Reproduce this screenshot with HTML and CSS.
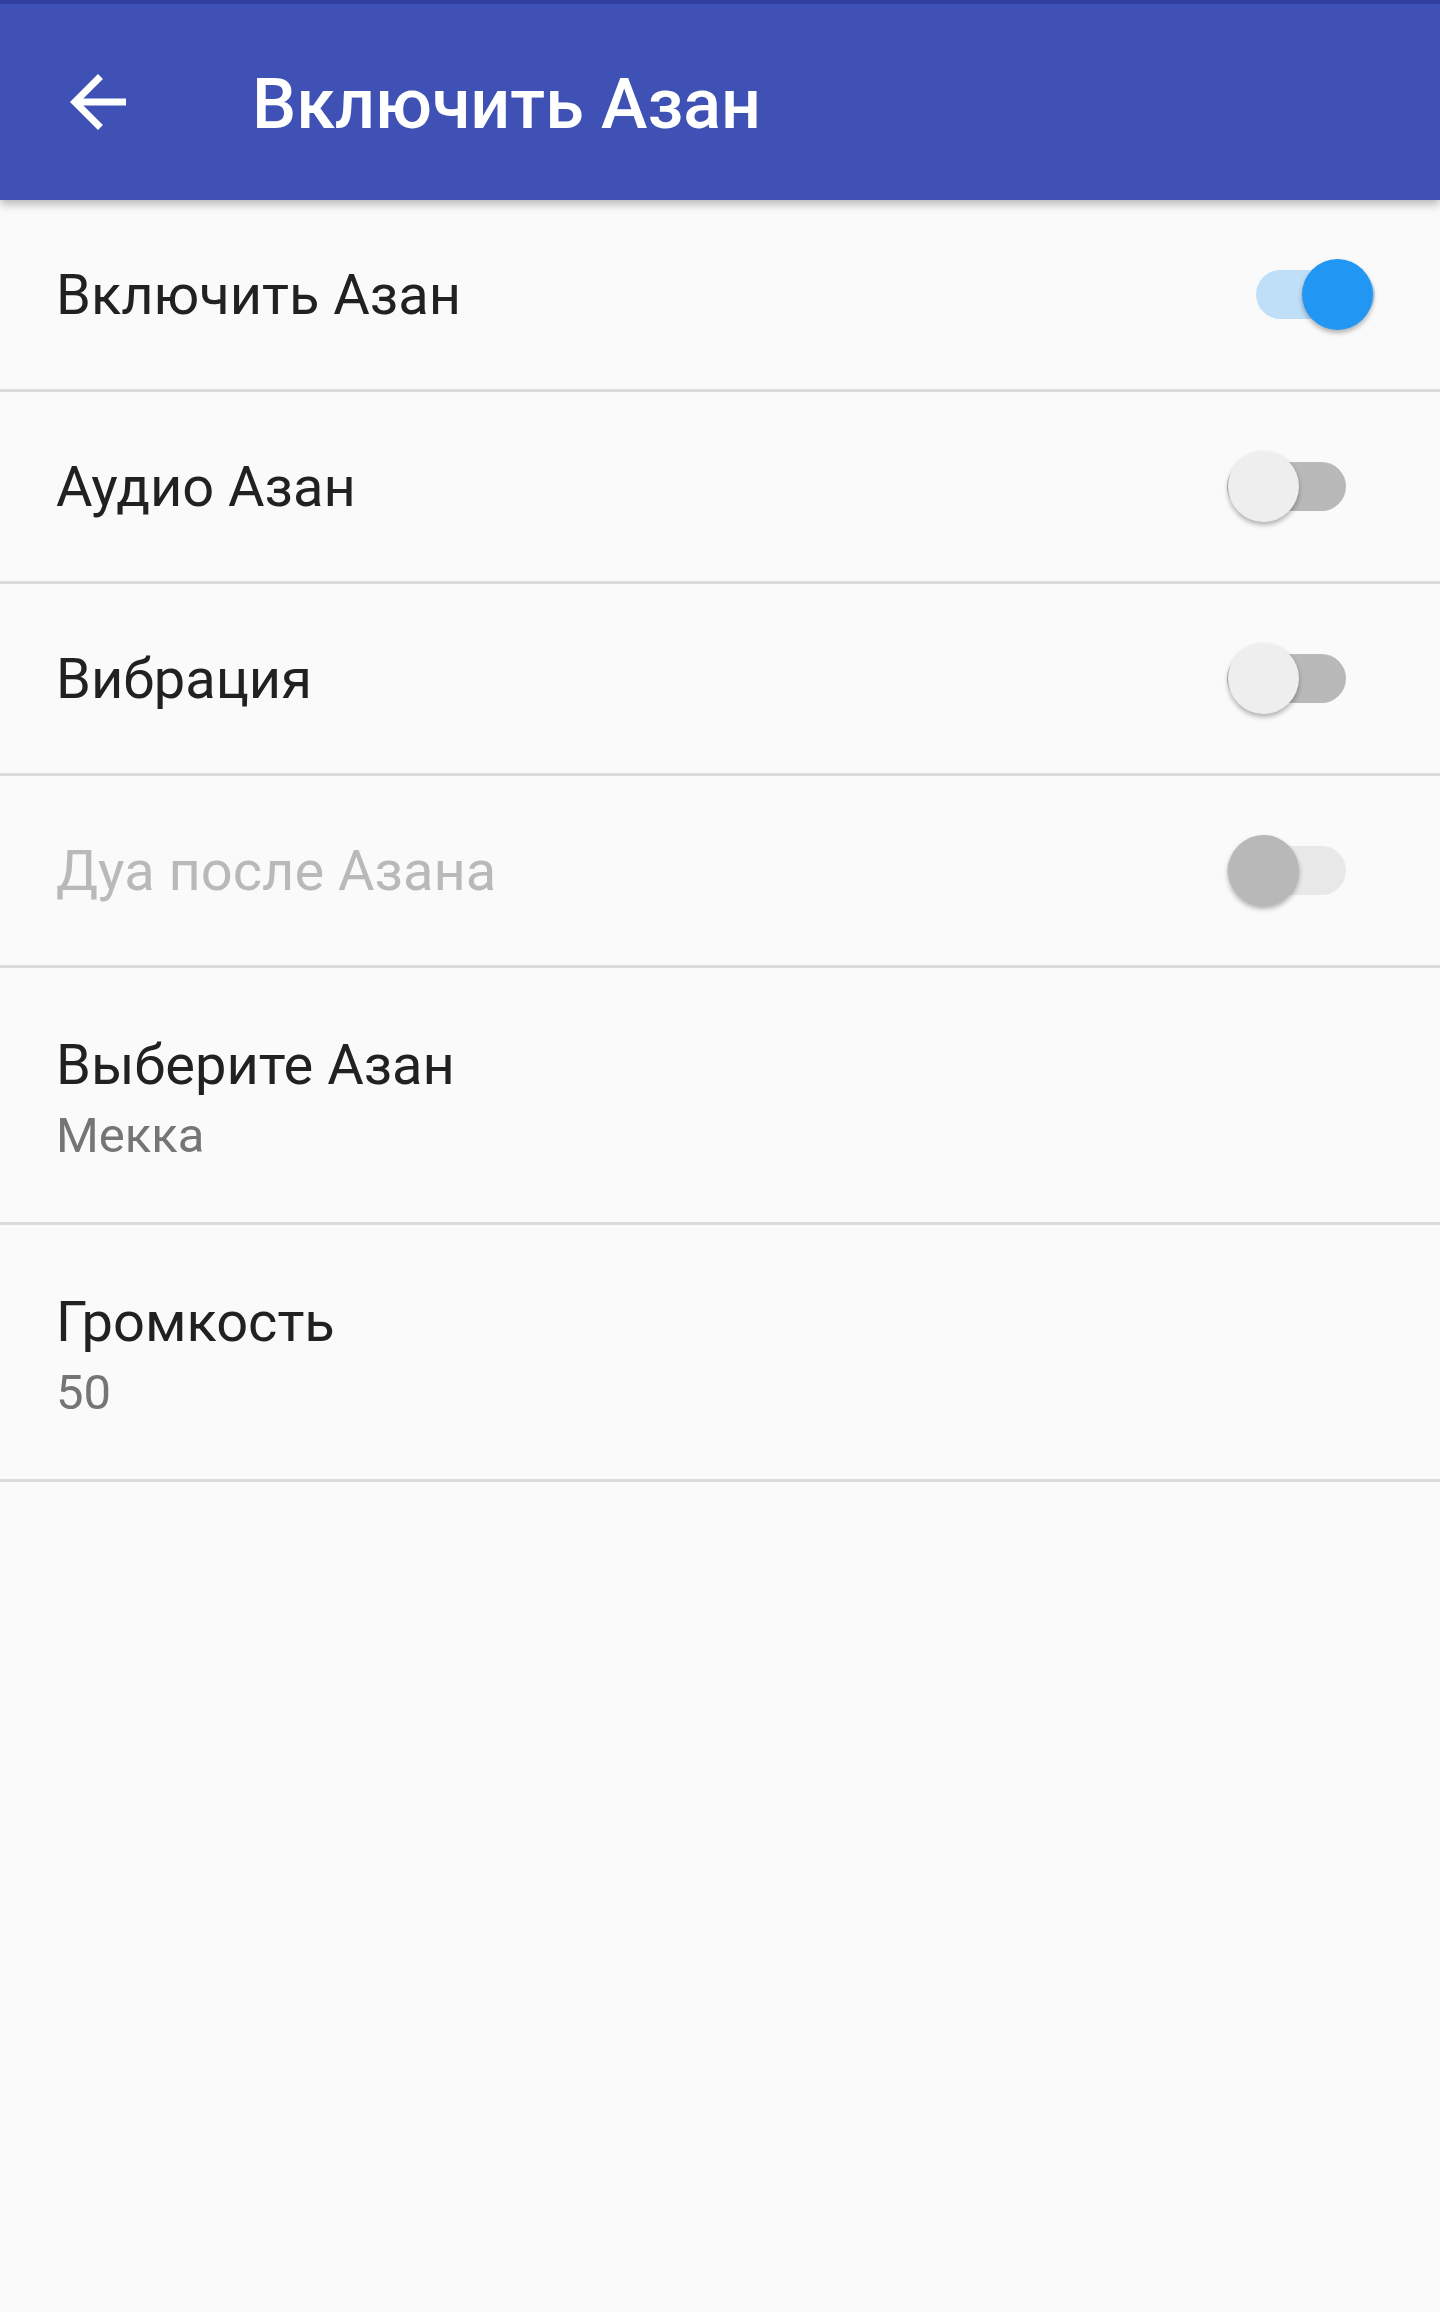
FILE: index.html
```html
<!DOCTYPE html>
<html>
<head>
<meta charset="utf-8">
<link rel="stylesheet" href="styles.css">
</head>
<body>
<header class="top">
    <div class="status"></div>
    <div class="appbar">
        <svg class="back" viewBox="0 0 24 24" width="84" height="84">
            <path fill="#fff" d="M20 11H7.83l5.59-5.59L12 4l-8 8 8 8 1.41-1.41L7.83 13H20v-2z"/>
        </svg>
        <h1 class="title">Включить Азан</h1>
    </div>
</header>
<main class="prefs">
    <div class="row">
        <span class="label">Включить Азан</span>
        <div class="switch on"><div class="track"></div><div class="thumb"></div></div>
    </div>
    <div class="row">
        <span class="label">Аудио Азан</span>
        <div class="switch"><div class="track"></div><div class="thumb"></div></div>
    </div>
    <div class="row">
        <span class="label">Вибрация</span>
        <div class="switch"><div class="track"></div><div class="thumb"></div></div>
    </div>
    <div class="row disabled">
        <span class="label">Дуа после Азана</span>
        <div class="switch"><div class="track"></div><div class="thumb"></div></div>
    </div>
    <div class="row two">
        <div class="label">Выберите Азан</div>
        <div class="summary">Мекка</div>
    </div>
    <div class="row two">
        <div class="label">Громкость</div>
        <div class="summary">50</div>
    </div>
</main>
</body>
</html>
```

FILE: styles.css
```css
html, body {
    margin: 0;
    padding: 0;
}

body {
    background: #fafafa;
    font-family: Roboto, "Noto Sans", sans-serif;
    min-height: 2312px;
}

.top {
    position: relative;
    z-index: 2;
    box-shadow: 0 4px 9px rgba(0, 0, 0, 0.28);
}

.status {
    height: 4px;
    background: #303f9f;
}

.appbar {
    height: 196px;
    background: #3f51b5;
    display: flex;
    align-items: center;
}

.back {
    margin-left: 56px;
    flex: none;
}

.title {
    margin: 0 0 0 112px;
    padding-top: 4px;
    color: #fff;
    font-size: 70px;
    font-weight: 500;
    line-height: 82px;
}

.prefs {
    display: flex;
    flex-direction: column;
}

.row {
    height: 189px;
    border-bottom: 3px solid #dcdcdc;
    display: flex;
    align-items: center;
    justify-content: space-between;
    padding: 0 94px 0 56px;
}

.label {
    color: #212121;
    font-size: 56px;
    line-height: 66px;
}

.disabled .label {
    color: #b9b9b9;
}

.row.two {
    height: auto;
    flex-direction: column;
    align-items: flex-start;
    justify-content: flex-start;
    padding-top: 64px;
    padding-bottom: 57px;
}

.summary {
    margin-top: 9px;
    color: #757575;
    font-size: 49px;
    line-height: 58px;
}

.switch {
    position: relative;
    width: 119px;
    height: 71px;
    flex: none;
}

.switch.on {
    margin-right: -29px;
}

.track {
    position: absolute;
    left: 0;
    top: 11px;
    width: 119px;
    height: 49px;
    border-radius: 25px;
    background: #b9b9b9;
}

.thumb {
    position: absolute;
    left: 1px;
    top: 0;
    width: 71px;
    height: 71px;
    border-radius: 50%;
    background: #eeeeee;
    box-shadow: 0 3px 5px rgba(0, 0, 0, 0.3);
}

.on .track {
    background: #bfdff9;
}

.on .thumb {
    left: 46px;
    background: #2196f3;
}

.disabled .track {
    background: #e8e8e8;
}

.disabled .thumb {
    background: #b8b8b8;
}
```
